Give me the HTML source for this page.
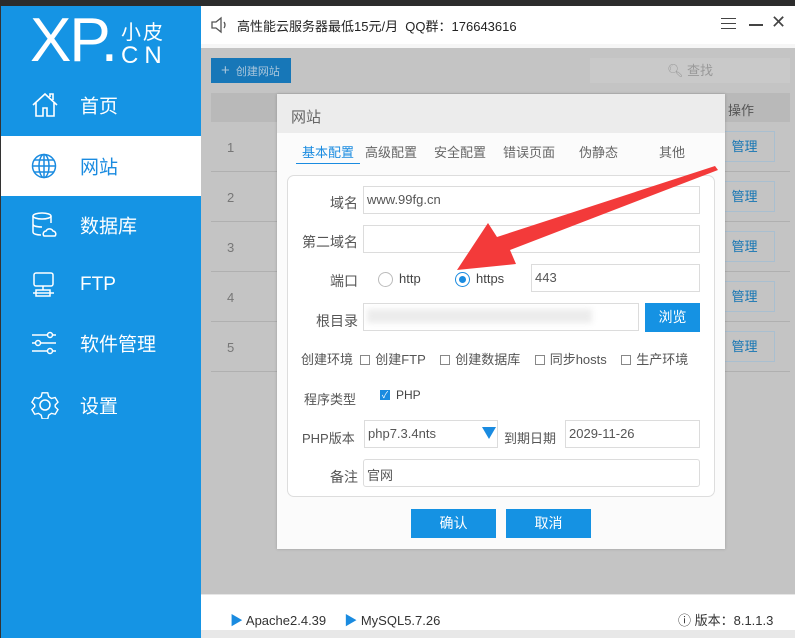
<!DOCTYPE html><html><head><meta charset="utf-8"><style>
*{margin:0;padding:0;box-sizing:border-box}
body{width:795px;height:638px;overflow:hidden;position:relative;background:#c4c4c4;font-family:"Liberation Sans","Noto Sans CJK SC",sans-serif;}
.a{position:absolute}
.side{left:0;top:6px;width:201px;height:632px;background:#1594e4;border-left:1px solid #333}
.nav{left:1px;width:200px;height:58px;color:#fff;font-size:19px}
.nav span{position:absolute;left:79px;top:50%;transform:translateY(-50%)}
.nav svg{position:absolute;left:30px;top:50%;transform:translateY(-50%)}
.inp{background:#fff;border:1px solid #dcdcdc;font-size:13px;color:#555;padding:5px 3px}
.lbl{font-size:14px;color:#555;text-align:right;width:70px}
.btn{background:#1592e3;color:#fff;font-size:14px;text-align:center}
.row{left:211px;width:579px;height:50px;border-bottom:1px solid #b0b0b0;font-size:13px;color:#777}
.mg{left:714px;width:61px;height:31px;border:1px solid #a9bfd0;color:#1676b4;font-size:13px;text-align:center;line-height:29px;background:#c4c4c4}
.cb{display:inline-block;width:10px;height:10px;border:1px solid #888;vertical-align:-1px;margin-right:5px;background:#fff}
</style></head><body>
<div class="a" style="left:0;top:0;width:795px;height:6px;background:#2c2c2c"></div>
<div class="a side"></div>
<div class="a" style="left:30px;top:6px;color:#fff;font-size:62px;line-height:70px;letter-spacing:-2px">XP<span style="font-size:62px">.</span></div>
<div class="a" style="left:121px;top:16px;color:#fff;font-size:20px;letter-spacing:2px">小皮</div>
<div class="a" style="left:121px;top:42px;color:#fff;font-size:24px;letter-spacing:6px">CN</div>
<div class="a nav" style="top:76px"><svg width="28" height="28" viewBox="0 0 28 28" fill="none" stroke="#fff" stroke-width="1.6"><path d="M2 14L14 3l12 11M5 11v14h7v-8h4v8h7V11M19 6V3h3v6"/></svg><span>首页</span></div>
<div class="a" style="left:1px;top:136px;width:200px;height:60px;background:#fff"></div>
<div class="a nav" style="top:137px;color:#1a8be0"><svg width="26" height="26" viewBox="0 0 26 26" fill="none" stroke="#1a8be0" stroke-width="1.5"><circle cx="13" cy="13" r="11.5"/><ellipse cx="13" cy="13" rx="5" ry="11.5"/><path d="M1.5 13h23M3 7h20M3 19h20M13 1.5v23"/></svg><span>网站</span></div>
<div class="a nav" style="top:196px"><svg width="26" height="26" viewBox="0 0 26 26" fill="none" stroke="#fff" stroke-width="1.5"><ellipse cx="11" cy="4" rx="9" ry="3"/><path d="M2 4v16c0 2 4 3 8 3M20 4v7M2 12c0 2 4 3 9 3"/><path d="M13 24h11a3 3 0 0 0-2-5 4 4 0 0 0-7 0 3 3 0 0 0-2 5z"/></svg><span>数据库</span></div>
<div class="a nav" style="top:256px"><svg width="26" height="26" viewBox="0 0 26 26" fill="none" stroke="#fff" stroke-width="1.5"><rect x="3" y="1" width="19" height="13" rx="2"/><path d="M12 14v4M2 21h21M5 18h14v6H5z"/></svg><span>FTP</span></div>
<div class="a nav" style="top:314px"><svg width="26" height="24" viewBox="0 0 26 24" fill="none" stroke="#fff" stroke-width="1.5"><path d="M1 4h15M22 4h3M1 12h3M10 12h15M1 20h15M22 20h3"/><circle cx="19" cy="4" r="2.5"/><circle cx="7" cy="12" r="2.5"/><circle cx="19" cy="20" r="2.5"/></svg><span>软件管理</span></div>
<div class="a nav" style="top:376px"><svg width="28" height="28" viewBox="0 0 28 28" fill="none" stroke="#fff" stroke-width="1.5"><path d="M11 2h6l1 4 3 2 4-1 3 5-3 3v2l3 3-3 5-4-1-3 2-1 4h-6l-1-4-3-2-4 1-3-5 3-3v-2L0 12l3-5 4 1 3-2z" transform="scale(.93) translate(1,0)"/><circle cx="14" cy="14" r="5"/></svg><span>设置</span></div>
<div class="a" style="left:201px;top:6px;width:594px;height:38px;background:#fff"></div>
<div class="a" style="left:201px;top:44px;width:594px;height:4px;background:#f6f6f6"></div>
<svg class="a" style="left:211px;top:16px" width="16" height="18" viewBox="0 0 16 18" fill="none" stroke="#555" stroke-width="1.3"><path d="M1 6h4l5-4v14l-5-4H1zM13 6q2 3 0 6"/></svg>
<div class="a" style="left:237px;top:16px;font-size:13px;color:#222">高性能云服务器最低15元/月&nbsp; QQ群：176643616</div>
<div class="a" style="left:721px;top:18px;width:15px;height:1px;background:#444;box-shadow:0 5px 0 #444,0 10px 0 #444"></div>
<div class="a" style="left:749px;top:24px;width:14px;height:2px;background:#444"></div>
<div class="a" style="left:771px;top:12px;font-size:18px;color:#444">✕</div>
<div class="a" style="left:211px;top:58px;width:80px;height:25px;background:#1777b8;color:#a9c6dc;font-size:11px;line-height:25px;padding-left:10px"><span style="font-size:15px">+</span>&nbsp; 创建网站</div>
<div class="a" style="left:590px;top:58px;width:200px;height:25px;background:#c9c9c9;color:#999;font-size:13px;line-height:25px;text-align:center">🔍︎ 查找</div>
<div class="a" style="left:211px;top:93px;width:579px;height:29px;background:#b9b9b9"></div>
<div class="a" style="left:728px;top:100px;font-size:13px;color:#555">操作</div>
<div class="a row" style="top:122px"><span class="a" style="left:16px;top:18px">1</span></div>
<div class="a row" style="top:172px"><span class="a" style="left:16px;top:18px">2</span></div>
<div class="a row" style="top:222px"><span class="a" style="left:16px;top:18px">3</span></div>
<div class="a row" style="top:272px"><span class="a" style="left:16px;top:18px">4</span></div>
<div class="a row" style="top:322px"><span class="a" style="left:16px;top:18px">5</span></div>
<div class="a mg" style="top:131px">管理</div><div class="a mg" style="top:181px">管理</div><div class="a mg" style="top:231px">管理</div><div class="a mg" style="top:281px">管理</div><div class="a mg" style="top:331px">管理</div>
<!-- modal -->
<div class="a" style="left:277px;top:94px;width:448px;height:455px;background:#fbfbfb;box-shadow:0 0 3px rgba(0,0,0,.2)"></div>
<div class="a" style="left:277px;top:94px;width:448px;height:39px;background:#ececec;font-size:15px;color:#666;padding:12px 0 0 14px">网站</div>
<div class="a" style="left:296px;top:137px;width:424px;height:26px;font-size:13px;color:#666">
<span class="a" style="left:0;width:64px;text-align:center;color:#1a8be0;top:5px">基本配置</span>
<div class="a" style="left:0;top:26px;width:64px;height:1px;background:#1a8be0"></div>
<span class="a" style="left:69px;top:5px">高级配置</span><span class="a" style="left:138px;top:5px">安全配置</span><span class="a" style="left:207px;top:5px">错误页面</span><span class="a" style="left:283px;top:5px">伪静态</span><span class="a" style="left:363px;top:5px">其他</span></div>
<div class="a" style="left:287px;top:175px;width:428px;height:322px;border:1px solid #ddd;border-radius:7px;background:#fff"></div>
<div class="a lbl" style="left:288px;top:193px">域名</div><div class="a inp" style="left:363px;top:186px;width:337px;height:28px">www.99fg.cn</div>
<div class="a lbl" style="left:288px;top:232px">第二域名</div><div class="a inp" style="left:363px;top:225px;width:337px;height:28px"></div>
<div class="a lbl" style="left:288px;top:271px">端口</div>
<div class="a" style="left:378px;top:272px;width:15px;height:15px;border:1px solid #bbb;border-radius:50%"></div>
<div class="a" style="left:399px;top:271px;font-size:13px;color:#444">http</div>
<div class="a" style="left:455px;top:272px;width:15px;height:15px;border:1px solid #1a8be0;border-radius:50%"><div style="margin:3px;width:7px;height:7px;border-radius:50%;background:#1a8be0"></div></div>
<div class="a" style="left:476px;top:271px;font-size:13px;color:#444">https</div>
<div class="a inp" style="left:531px;top:264px;width:169px;height:28px">443</div>
<div class="a lbl" style="left:288px;top:311px">根目录</div><div class="a inp" style="left:363px;top:303px;width:276px;height:28px"><div style="width:225px;height:14px;background:#ececec;filter:blur(3px)"></div></div>
<div class="a btn" style="left:645px;top:303px;width:55px;height:29px;line-height:29px">浏览</div>
<div class="a" style="left:301px;top:349px;font-size:13px;color:#555;white-space:nowrap">创建环境&nbsp; <span class="cb"></span>创建FTP&nbsp;&nbsp;&nbsp; <span class="cb"></span>创建数据库&nbsp;&nbsp;&nbsp; <span class="cb"></span>同步hosts&nbsp;&nbsp;&nbsp; <span class="cb"></span>生产环境</div>
<div class="a" style="left:304px;top:389px;font-size:13px;color:#555">程序类型</div>
<div class="a" style="left:380px;top:390px;width:10px;height:10px;background:#1a8be0;color:#fff;font-size:9px;line-height:10px;text-align:center">✓</div>
<div class="a" style="left:396px;top:388px;font-size:12px;color:#444">PHP</div>
<div class="a" style="left:302px;top:428px;font-size:13px;color:#555">PHP版本</div>
<div class="a inp" style="left:364px;top:420px;width:134px;height:28px">php7.3.4nts</div>
<div class="a" style="left:482px;top:427px;width:0;height:0;border-left:7px solid transparent;border-right:7px solid transparent;border-top:12px solid #1a8be0"></div>
<div class="a" style="left:504px;top:428px;font-size:13px;color:#555">到期日期</div>
<div class="a inp" style="left:565px;top:420px;width:135px;height:28px">2029-11-26</div>
<div class="a lbl" style="left:288px;top:467px">备注</div><div class="a inp" style="left:363px;top:459px;width:337px;height:28px;border-radius:3px">官网</div>
<div class="a btn" style="left:411px;top:509px;width:85px;height:29px;line-height:29px">确认</div>
<div class="a btn" style="left:506px;top:509px;width:85px;height:29px;line-height:29px">取消</div>
<svg class="a" style="left:440px;top:160px" width="290" height="130"><path d="M278 10 L70 90 L76 104 L17 110 L48 63 L57 77 L275 6 Z" fill="#f33a3a"/></svg>
<!-- footer -->
<div class="a" style="left:201px;top:594px;width:594px;height:36px;background:#fff;border-top:1px solid #e6e6e6"></div>
<div class="a" style="left:230px;top:610px;font-size:13px;color:#333"><span style="color:#1a8be0">▶</span> Apache2.4.39&nbsp;&nbsp;&nbsp;&nbsp; <span style="color:#1a8be0">▶</span> MySQL5.7.26</div>
<div class="a" style="left:678px;top:610px;font-size:13px;color:#333">ⓘ 版本：8.1.1.3</div>
<div class="a" style="left:201px;top:630px;width:594px;height:8px;background:#e8e8e8"></div>
</body></html>
